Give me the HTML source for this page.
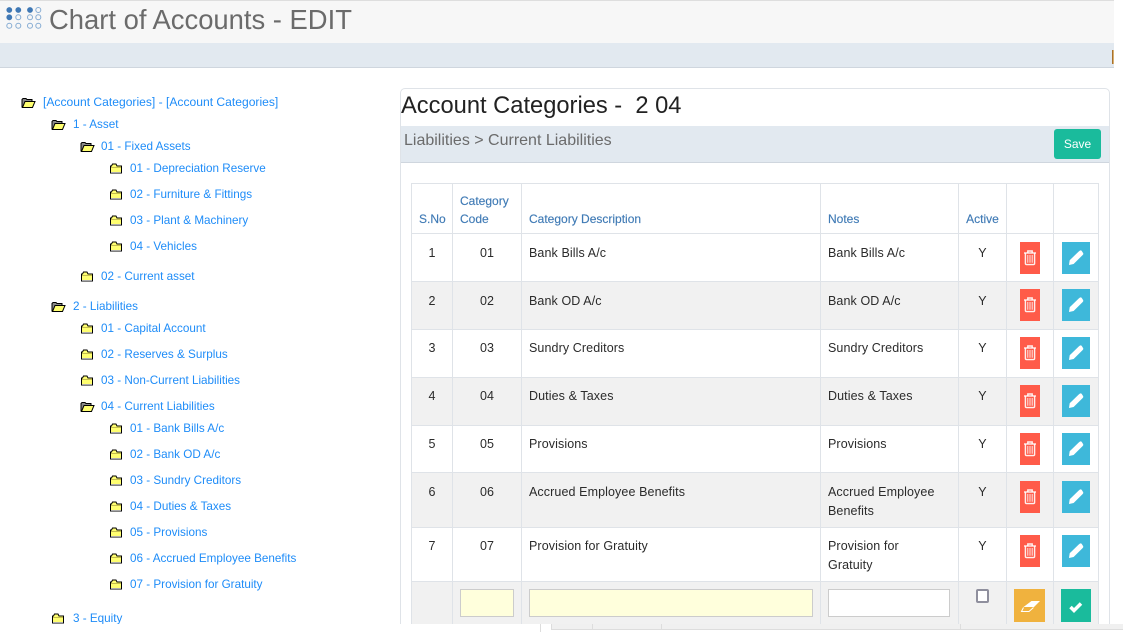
<!DOCTYPE html>
<html><head><meta charset="utf-8"><style>
html,body{margin:0;padding:0;background:#fff;width:1123px;height:632px;overflow:hidden}
#w{position:relative;width:1123px;height:632px;overflow:hidden;font-family:"Liberation Sans",sans-serif;color:#333}
.a{position:absolute}
.t{position:absolute;margin-top:1px;font-size:11.7px;line-height:16px;color:#1e8cf8;white-space:nowrap}
table{position:absolute;left:411px;top:183px;width:687px;table-layout:fixed;border-collapse:collapse;font-size:12.5px;letter-spacing:.1px}
td,th{border:1px solid #dfe3e8;padding:0;vertical-align:top;line-height:19px;color:#2b2b2b;font-weight:normal}
th{color:#3f7ab5;vertical-align:bottom;text-align:left;font-size:12px;line-height:18px;padding:0 7px 5px;-webkit-text-stroke:.15px #3f7ab5;letter-spacing:0}
tr.g td{background:#f1f1f1}
td{padding:10px 7px 0}
tr.u td{padding-top:9px}
td.c,th.c{text-align:center}
</style></head><body><div id="w">
<svg width="0" height="0" style="position:absolute"><defs>
<g id="cl"><path d="M1.500 3h1l1-2h3.500l1 2h4.500v7H1.500z" fill="#ffff70" stroke="#000"/><path d="M2 4.500h10" stroke="#c4bc50"/><path d="M2 9.500h10" stroke="#aaa"/></g>
<g id="op"><path d="M1 10.500V2.500l1-1h3l1 1h5v2" fill="#8a8a8a" stroke="#000"/><path d="M1.500 10.500l2.500-6h10l-2.500 6z" fill="#ffff70" stroke="#000"/></g>
<g id="tr"><g fill="none" stroke="#fff" stroke-width="1.400" stroke-opacity=".9"><path d="M-6-5H6"/><path d="M-2.200-5V-7H2.200V-5"/><path d="M-4.600-5V5.400Q-4.600 6.600-3.400 6.600H3.400Q4.600 6.600 4.600 5.400V-5"/></g><path d="M-2.200-3V4.700M0-3V4.700M2.200-3V4.700" stroke="#fff" stroke-width="1" stroke-opacity=".85"/></g>
<path id="pe" d="M-7 7L-6.300 2.200L2.600-6.400L4-7.500Q5-8 5.700-7.100L7.200-4.700Q7.600-3.700 6.700-3L-2.400 6Z" fill="#fff"/>
</defs></svg>

<div class="a" style="left:0;top:0;width:1114px;height:43px;background:#f7f7f7;border-top:1px solid #dedede;box-sizing:border-box"></div>
<div class="a" style="left:0;top:43px;width:1114px;height:24px;background:#e2e9f0;border-bottom:1px solid #cfd6de"></div>
<div class="a" style="left:1112px;top:50px;width:2px;height:14px;background:#d8b070;border-left:1px solid #a8702c;box-sizing:border-box"></div>

<svg class="a" style="left:5px;top:5px" width="38" height="26" viewBox="5 5 38 26">
<g fill="#3f78b5"><circle cx="9.300" cy="10" r="2.900"/><circle cx="18.300" cy="10" r="2.900"/><circle cx="30" cy="10" r="2.900"/><circle cx="9.300" cy="17.300" r="2.900"/></g>
<g fill="none" stroke="#86acd3" stroke-width="1"><circle cx="38.300" cy="10" r="2.500"/><circle cx="18.300" cy="17.300" r="2.500"/><circle cx="30" cy="17.300" r="2.500"/><circle cx="38.300" cy="17.300" r="2.500"/><circle cx="9.300" cy="25.700" r="2.500"/><circle cx="18.300" cy="25.700" r="2.500"/><circle cx="30" cy="25.700" r="2.500"/><circle cx="38.300" cy="25.700" r="2.500"/></g></svg>
<div class="a" style="left:49px;top:2px;font-size:27.400px;line-height:36px;color:#6b6b6b;white-space:nowrap">Chart of Accounts - EDIT</div>

<div class="t" style="left:43px;top:93px;font-size:12.100px">[Account Categories] - [Account Categories]</div>
<div class="t" style="left:73px;top:116px">1 - Asset</div>
<div class="t" style="left:101px;top:138px">01 - Fixed Assets</div>
<div class="t" style="left:130px;top:160px">01 - Depreciation Reserve</div>
<div class="t" style="left:130px;top:186px">02 - Furniture &amp; Fittings</div>
<div class="t" style="left:130px;top:212px">03 - Plant &amp; Machinery</div>
<div class="t" style="left:130px;top:238px">04 - Vehicles</div>
<div class="t" style="left:101px;top:268px">02 - Current asset</div>
<div class="t" style="left:73px;top:298px">2 - Liabilities</div>
<div class="t" style="left:101px;top:320px">01 - Capital Account</div>
<div class="t" style="left:101px;top:346px">02 - Reserves &amp; Surplus</div>
<div class="t" style="left:101px;top:372px">03 - Non-Current Liabilities</div>
<div class="t" style="left:101px;top:398px">04 - Current Liabilities</div>
<div class="t" style="left:130px;top:420px">01 - Bank Bills A/c</div>
<div class="t" style="left:130px;top:446px">02 - Bank OD A/c</div>
<div class="t" style="left:130px;top:472px">03 - Sundry Creditors</div>
<div class="t" style="left:130px;top:498px">04 - Duties &amp; Taxes</div>
<div class="t" style="left:130px;top:524px">05 - Provisions</div>
<div class="t" style="left:130px;top:550px">06 - Accrued Employee Benefits</div>
<div class="t" style="left:130px;top:576px">07 - Provision for Gratuity</div>
<div class="t" style="left:73px;top:610px">3 - Equity</div>

<svg class="a" style="left:0;top:0" width="140" height="632">
<use href="#op" x="21" y="97"/><use href="#op" x="51" y="119"/><use href="#op" x="80" y="141"/>
<use href="#cl" x="109" y="163"/><use href="#cl" x="109" y="189"/><use href="#cl" x="109" y="215"/><use href="#cl" x="109" y="241"/>
<use href="#cl" x="80" y="271"/><use href="#op" x="51" y="301"/>
<use href="#cl" x="80" y="323"/><use href="#cl" x="80" y="349"/><use href="#cl" x="80" y="375"/><use href="#op" x="80" y="401"/>
<use href="#cl" x="109" y="423"/><use href="#cl" x="109" y="449"/><use href="#cl" x="109" y="475"/><use href="#cl" x="109" y="501"/><use href="#cl" x="109" y="527"/><use href="#cl" x="109" y="553"/><use href="#cl" x="109" y="579"/>
<use href="#cl" x="51" y="613"/>
</svg>

<div class="a" style="left:400px;top:88px;width:710px;height:560px;box-sizing:border-box;border:1px solid #dfe3e8;border-radius:5px"></div>
<div class="a" style="left:401px;top:92px;font-size:23.700px;line-height:28px;color:#222;white-space:pre">Account Categories -  2 04</div>
<div class="a" style="left:401px;top:126px;width:708px;height:36px;background:#e2e9f0;border-bottom:1px solid #cfd6de"></div>
<div class="a" style="left:404px;top:131px;font-size:16px;line-height:20px;color:#6b6b6b;white-space:nowrap">Liabilities &gt; Current Liabilities</div>
<div class="a" style="left:1054px;top:129px;width:47px;height:30px;background:#1abb9c;border-radius:3px;color:#fff;font-size:12px;line-height:31px;text-align:center">Save</div>

<table>
<colgroup><col style="width:41px"><col style="width:69px"><col style="width:299px"><col style="width:138px"><col style="width:48px"><col style="width:47px"><col style="width:45px"></colgroup>
<tr style="height:50px"><th>S.No</th><th>Category Code</th><th>Category Description</th><th>Notes</th><th class="c" style="padding:0 0 5px">Active</th><th></th><th></th></tr>
<tr style="height:48px"><td class="c">1</td><td class="c">01</td><td>Bank Bills A/c</td><td>Bank Bills A/c</td><td class="c">Y</td><td></td><td></td></tr>
<tr style="height:48px" class="g"><td class="c">2</td><td class="c">02</td><td>Bank OD A/c</td><td>Bank OD A/c</td><td class="c">Y</td><td></td><td></td></tr>
<tr style="height:48px" class="u"><td class="c">3</td><td class="c">03</td><td>Sundry Creditors</td><td>Sundry Creditors</td><td class="c">Y</td><td></td><td></td></tr>
<tr style="height:48px" class="g u"><td class="c">4</td><td class="c">04</td><td>Duties &amp; Taxes</td><td>Duties &amp; Taxes</td><td class="c">Y</td><td></td><td></td></tr>
<tr style="height:47px" class="u"><td class="c">5</td><td class="c">05</td><td>Provisions</td><td>Provisions</td><td class="c">Y</td><td></td><td></td></tr>
<tr style="height:55px" class="g"><td class="c">6</td><td class="c">06</td><td>Accrued Employee Benefits</td><td>Accrued Employee Benefits</td><td class="c">Y</td><td></td><td></td></tr>
<tr style="height:54px" class="u"><td class="c">7</td><td class="c">07</td><td>Provision for Gratuity</td><td>Provision for<br>Gratuity</td><td class="c">Y</td><td></td><td></td></tr>
<tr style="height:50px" class="g"><td></td><td></td><td></td><td></td><td></td><td></td><td></td></tr>
</table>

<svg class="a" style="left:1010px;top:230px" width="90" height="340" viewBox="1010 230 90 340">
<g fill="#ff5b49"><rect x="1020" y="242" width="20" height="32"/><rect x="1020" y="289" width="20" height="32"/><rect x="1020" y="337" width="20" height="32"/><rect x="1020" y="385" width="20" height="32"/><rect x="1020" y="433" width="20" height="32"/><rect x="1020" y="481" width="20" height="32"/><rect x="1020" y="535" width="20" height="32"/></g>
<g fill="#3eb8da"><rect x="1062" y="242" width="28" height="32"/><rect x="1062" y="289" width="28" height="32"/><rect x="1062" y="337" width="28" height="32"/><rect x="1062" y="385" width="28" height="32"/><rect x="1062" y="433" width="28" height="32"/><rect x="1062" y="481" width="28" height="32"/><rect x="1062" y="535" width="28" height="32"/></g>
<use href="#tr" x="1030" y="258"/><use href="#tr" x="1030" y="305"/><use href="#tr" x="1030" y="353"/><use href="#tr" x="1030" y="401"/><use href="#tr" x="1030" y="449"/><use href="#tr" x="1030" y="497"/><use href="#tr" x="1030" y="551"/>
<use href="#pe" x="1076" y="258"/><use href="#pe" x="1076" y="305"/><use href="#pe" x="1076" y="353"/><use href="#pe" x="1076" y="401"/><use href="#pe" x="1076" y="449"/><use href="#pe" x="1076" y="497"/><use href="#pe" x="1076" y="551"/>
</svg>

<div class="a" style="left:460px;top:589px;width:54px;height:28px;box-sizing:border-box;background:#ffffdc;border:1px solid #ccc"></div>
<div class="a" style="left:529px;top:589px;width:284px;height:28px;box-sizing:border-box;background:#ffffdc;border:1px solid #ccc"></div>
<div class="a" style="left:828px;top:589px;width:122px;height:28px;box-sizing:border-box;background:#fff;border:1px solid #ccc"></div>
<div class="a" style="left:976px;top:589px;width:13px;height:14px;box-sizing:border-box;background:#fff;border:2px solid #8f8f9d;border-radius:2px"></div>
<div class="a" style="left:1014px;top:589px;width:31px;height:33px;background:#f0b23e"></div>
<div class="a" style="left:1061px;top:589px;width:30px;height:33px;background:#1abb9c"></div>
<svg class="a" style="left:1014px;top:589px" width="77" height="34" viewBox="0 0 77 34">
<path d="M9.500 18L17.500 12H26L20 18Z" fill="#fff"/><path d="M9.500 18.500L7.500 22.500H15L19.500 18.500" fill="none" stroke="#fff" stroke-width="1"/>
<path d="M56.500 18l3.500 3.500 7-7" fill="none" stroke="#fff" stroke-width="3.500"/>
</svg>

<div class="a" style="left:0;top:624px;width:1123px;height:8px;background:#fff"></div>
<div class="a" style="left:540px;top:624px;width:1px;height:8px;background:#ddd"></div>
<div class="a" style="left:551px;top:624px;width:572px;height:5px;background:#f0f0f0;border-left:1px solid #ddd;border-bottom:1px solid #ddd"></div>
<div class="a" style="left:592px;top:624px;width:1px;height:5px;background:#ddd"></div>
<div class="a" style="left:661px;top:624px;width:1px;height:5px;background:#ddd"></div>
<div class="a" style="left:960px;top:624px;width:1px;height:5px;background:#ddd"></div>
</div></body></html>
